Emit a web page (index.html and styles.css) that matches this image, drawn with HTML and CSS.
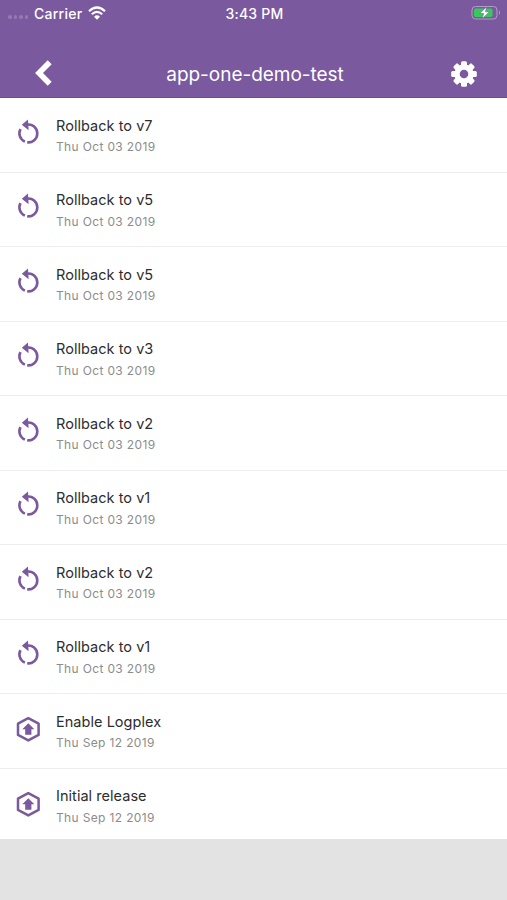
FILE: index.html
```
<!DOCTYPE html>
<html lang="en">
<head>
<meta charset="utf-8">
<meta name="viewport" content="width=device-width, initial-scale=1">
<title>app-one-demo-test</title>
<link rel="stylesheet" href="styles.css">
</head>
<body>
<svg class="defs" aria-hidden="true">
  <symbol id="rollback" viewBox="0 0 24 28">
    <path d="M10 6.8C16.5 5.2 21.3 9.8 21.3 15.5A8.9 8.9 0 0 1 11.2 24.3M8.9 23.6A8.9 8.9 0 0 1 4.5 11.2" fill="none" stroke="currentColor" stroke-width="2.6"/>
    <path d="M5.8 6.8L12 1.5L12.6 12.2Z" fill="currentColor"/>
  </symbol>
  <symbol id="release" viewBox="0 0 24 28">
    <path d="M12.3 3.2L22.6 8.7V19.9L12.3 25.4L2 19.9V8.7Z" fill="none" stroke="currentColor" stroke-width="2.5" stroke-linejoin="round"/>
    <path d="M12.3 8.2L18.3 14.2H15.4V19.7H9.2V14.2H6.3Z" fill="currentColor"/>
  </symbol>
</svg>
<header class="header">
  <div class="status">
    <div class="carrier">
      <span class="signal"><i></i><i></i><i></i><i></i></span>
      <span class="carrier-name">Carrier</span>
      <svg class="wifi" viewBox="0 0 18 14"><path d="M1 5.2Q9-2.2 17 5.2M3.8 8.2Q9 3.4 14.2 8.2" fill="none" stroke="#fff" stroke-width="2.2"/><path d="M6 10.7Q9 8 12 10.7L9 13.8Z" fill="#fff"/></svg>
    </div>
    <span class="time">3:43 PM</span>
    <svg class="battery" viewBox="0 0 30 16"><rect x="1" y="1.5" width="25" height="12.5" rx="3.5" fill="none" stroke="#b49bc9"/><rect x="3" y="3.5" width="18.5" height="8.5" rx="1.8" fill="#35cb5b"/><path d="M28 5.5Q30 7.7 28 10Z" fill="#b49bc9"/><path d="M15.8 1.8L8.6 8.5H12.6L11.2 13.8L18.5 6.8H14.5Z" fill="#fff" stroke="#7a599e" stroke-width=".6"/></svg>
  </div>
  <div class="nav">
    <svg class="back" viewBox="0 0 20 28"><path d="M16.7 3.2L6 14L16.7 24.8" fill="none" stroke="#fff" stroke-width="5.6" stroke-linejoin="miter"/></svg>
    <h1 class="title">app-one-demo-test</h1>
    <svg class="gear" viewBox="0 0 26 26"><g fill="#fff"><rect id="tooth" x="10" y=".2" width="6" height="25.6" rx="1.5"/><use href="#tooth" transform="rotate(45 13 13)"/><use href="#tooth" transform="rotate(90 13 13)"/><use href="#tooth" transform="rotate(135 13 13)"/><circle cx="13" cy="13" r="9.7"/></g><circle cx="13" cy="13" r="4.3" fill="#7a599e"/></svg>
  </div>
</header>
<main class="list">
  <div class="row"><svg class="icon"><use href="#rollback"/></svg><div><div class="name">Rollback to v7</div><div class="date">Thu Oct 03 2019</div></div></div>
  <div class="row"><svg class="icon"><use href="#rollback"/></svg><div><div class="name">Rollback to v5</div><div class="date">Thu Oct 03 2019</div></div></div>
  <div class="row"><svg class="icon"><use href="#rollback"/></svg><div><div class="name">Rollback to v5</div><div class="date">Thu Oct 03 2019</div></div></div>
  <div class="row"><svg class="icon"><use href="#rollback"/></svg><div><div class="name">Rollback to v3</div><div class="date">Thu Oct 03 2019</div></div></div>
  <div class="row"><svg class="icon"><use href="#rollback"/></svg><div><div class="name">Rollback to v2</div><div class="date">Thu Oct 03 2019</div></div></div>
  <div class="row"><svg class="icon"><use href="#rollback"/></svg><div><div class="name">Rollback to v1</div><div class="date">Thu Oct 03 2019</div></div></div>
  <div class="row"><svg class="icon"><use href="#rollback"/></svg><div><div class="name">Rollback to v2</div><div class="date">Thu Oct 03 2019</div></div></div>
  <div class="row"><svg class="icon"><use href="#rollback"/></svg><div><div class="name">Rollback to v1</div><div class="date">Thu Oct 03 2019</div></div></div>
  <div class="row"><svg class="icon release"><use href="#release"/></svg><div><div class="name">Enable Logplex</div><div class="date">Thu Sep 12 2019</div></div></div>
  <div class="row"><svg class="icon release"><use href="#release"/></svg><div><div class="name">Initial release</div><div class="date">Thu Sep 12 2019</div></div></div>
</main>
</body>
</html>
```
FILE: styles.css
```
* { box-sizing: border-box; }
body {
  margin: 0;
  height: 900px;
  overflow: hidden;
  background: #e3e3e3;
  font-family: Inter, "Liberation Sans", sans-serif;
}
svg { display: block; }
.defs { width: 0; height: 0; position: absolute; }
.header {
  height: 98px;
  background: #7a599e;
  border-bottom: 1px solid #6c4b91;
  color: #fff;
}
.status {
  display: grid;
  grid-template-columns: 1fr auto 1fr;
  align-items: center;
  height: 26px;
  padding: 0 6px 0 8px;
}
.carrier { display: flex; align-items: center; }
.signal { display: flex; gap: 2px; width: 26px; padding-top: 8px; }
.signal i { width: 3.6px; height: 3.6px; border-radius: 50%; background: #9678b2; }
.carrier-name { font-size: 14px; line-height: 17px; font-weight: 500; letter-spacing: .25px; }
.wifi { width: 18px; height: 14px; margin-left: 6px; }
.time { font-size: 14px; line-height: 17px; font-weight: 500; letter-spacing: .25px; }
.battery { width: 30px; height: 16px; justify-self: end; }
.nav {
  display: grid;
  grid-template-columns: 1fr auto 1fr;
  align-items: center;
  height: 50px;
  margin-top: 23px;
  padding: 0 30px 0 33px;
}
.back { width: 20px; height: 28px; margin-top: -2px; }
.title { margin: 1px 0 0; font-size: 19px; line-height: 26px; font-weight: 400; letter-spacing: -.03px; }
.gear { width: 26px; height: 26px; justify-self: end; }
.list { background: #fff; }
.row {
  display: flex;
  height: 74.5px;
  padding: 16.5px 0 0 16px;
  border-bottom: 1px solid #ededed;
}
.row:last-child { height: 70px; border-bottom: 0; }
.icon { width: 24px; height: 28px; margin: 3px 16px 0 0; color: #7a599e; }
.icon.release { margin-top: 4.5px; }
.name { font-size: 14.5px; line-height: 21px; color: #2d2d2d; letter-spacing: .04px; }
.date { font-size: 12px; line-height: 22px; color: #8c8c8c; letter-spacing: .35px; padding-top: .5px; }
```
